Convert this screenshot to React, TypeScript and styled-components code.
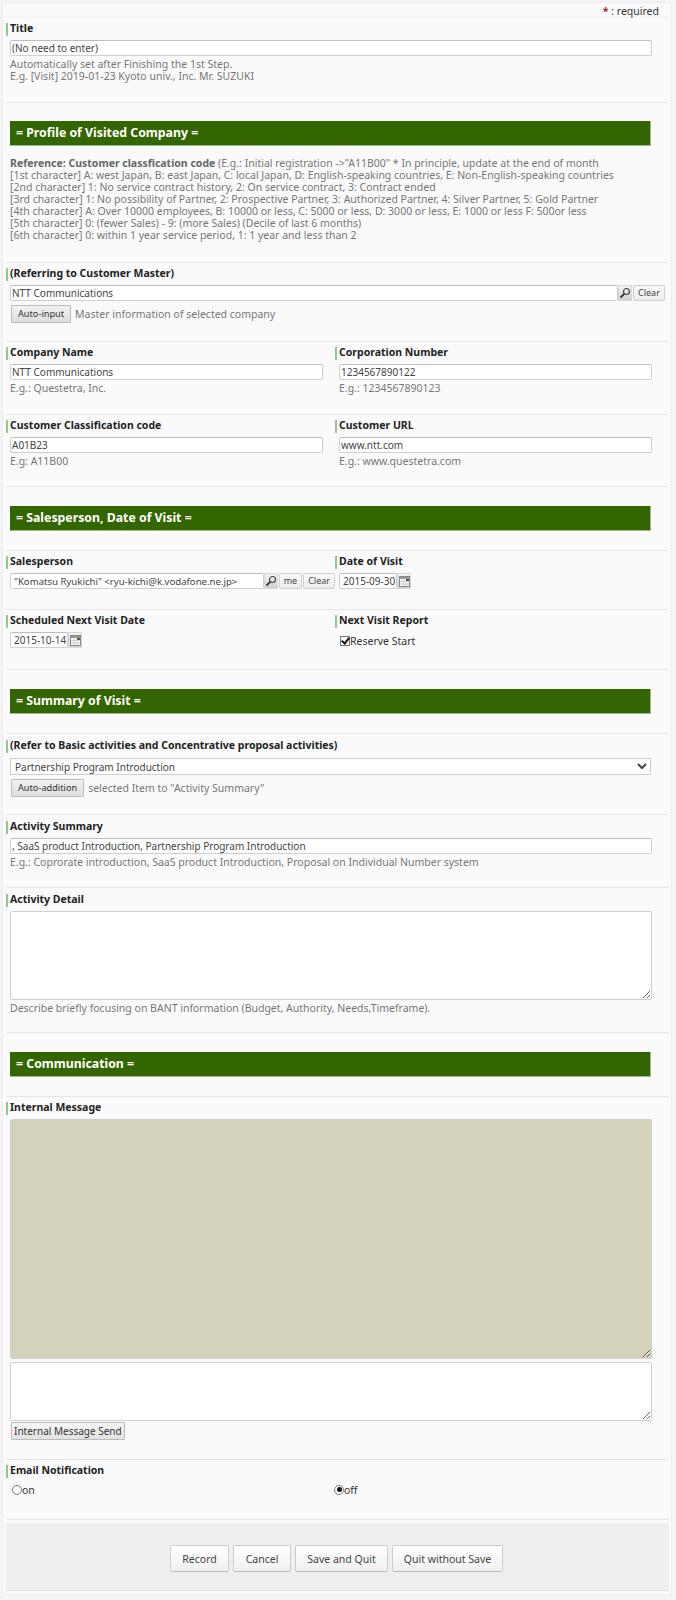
import styled, { createGlobalStyle } from "styled-components";

const GlobalStyle = createGlobalStyle`
  html, body {
    margin: 0;
    padding: 0;
    background-color: #f4f4f4;
  }
  body {
    font-family: "Noto Sans", Verdana, sans-serif;
    font-size: 10.5px;
    line-height: 12px;
    color: #222;
  }
`;

const Page = styled.div`
  width: 670px;
  height: 1593px;
  margin: 2px 0 0 2px;
  padding: 0 2px 0 3px;
  box-sizing: border-box;
  background-color: #fafafa;
  border: 1px solid #eeeeee;
`;

const RequiredBar = styled.div`
  height: 15px;
  padding: 2px 10px 0 0;
  box-sizing: border-box;
  text-align: right;
  border-bottom: 1px solid #f2f2f2;
  color: #333;
`;

const Star = styled.span`
  color: #aa2222;
  font-weight: bold;
`;

const Row = styled.section<{ $height: number; $pad?: number }>`
  height: ${props => props.$height}px;
  box-sizing: border-box;
  padding-top: ${props => props.$pad ?? 5}px;
  border-bottom: 1px solid #e6e6e6;
  display: flex;
`;

const Col = styled.div<{ $half?: boolean }>`
  width: ${props => (props.$half ? "329px" : "100%")};
  flex-shrink: 0;
`;

const Label = styled.div`
  height: 13px;
  line-height: 11px;
  padding-left: 2px;
  border-left: 2px solid #8fc98f;
  font-weight: bold;
  color: #222;
  white-space: nowrap;
`;

const Body = styled.div`
  padding: 4px 0 0 4px;
`;

const TextInput = styled.input<{ $width: number; $inset?: boolean }>`
  display: block;
  width: ${props => props.$width}px;
  height: 16px;
  margin: 0;
  padding: 0 0 0 ${props => (props.$inset ? 3 : 1)}px;
  box-sizing: border-box;
  background: #fff;
  border: 1px solid #cfcfcf;
  border-top-color: #bdbdbd;
  border-radius: 2px;
  font: inherit;
  font-size: 10px;
  color: #444;
  outline: none;
`;

const UserInput = styled(TextInput)`
  font-size: 9.6px;
`;

const Help = styled.div`
  margin-top: 2px;
  color: #777;
  white-space: nowrap;
`;

const Banner = styled.h2`
  margin: 0 0 0 4px;
  width: 641px;
  height: 25px;
  box-sizing: border-box;
  padding-left: 6px;
  background-color: #336600;
  border: 1px solid #9dbb8a;
  border-width: 0 1px 1px 0;
  color: #fff;
  font-size: 12.3px;
  font-weight: bold;
  line-height: 24px;
`;

const BannerRow = styled.section<{ $height: number; $top: number }>`
  height: ${props => props.$height}px;
  box-sizing: border-box;
  padding-top: ${props => props.$top}px;
  border-bottom: 1px solid #e6e6e6;
`;

const Reference = styled.div`
  margin: 11px 0 0 4px;
  color: #777;
  white-space: nowrap;
  b {
    color: #666;
  }
`;

const InputLine = styled.div`
  display: flex;
  align-items: center;
`;

const IconButton = styled.span`
  width: 14px;
  height: 16px;
  flex-shrink: 0;
  box-sizing: border-box;
  display: flex;
  align-items: center;
  justify-content: center;
  background: linear-gradient(#f4f4f4, #d0d0d0);
  border: 1px solid #d8d8d8;
`;

const SmallButton = styled.button`
  height: 16px;
  margin: 0 0 0 1px;
  padding: 0 4px;
  background: linear-gradient(#fafafa, #ececec);
  border: 1px solid #cfcfcf;
  border-radius: 2px;
  font: inherit;
  font-size: 9px;
  color: #444;
`;

const ActionLine = styled.div`
  display: flex;
  align-items: center;
  margin-top: 4px;
  color: #777;
`;

const GreyButton = styled.button`
  height: 18px;
  margin: 0 4px 0 1px;
  padding: 0 6px;
  background: linear-gradient(#f2f2f2, #dddddd);
  border: 1px solid #bbbbbb;
  border-radius: 1px;
  font: inherit;
  font-size: 9.2px;
  color: #333;
`;

const Select = styled.select`
  display: block;
  width: 641px;
  height: 17px;
  margin-top: 1px;
  padding: 0;
  box-sizing: border-box;
  background-color: #fff;
  border: 1px solid #cfcfcf;
  font: inherit;
  font-size: 10px;
  color: #444;
  outline: none;
`;

const Area = styled.textarea<{ $height: number; $locked?: boolean; $gap?: number }>`
  display: block;
  width: 642px;
  height: ${props => props.$height}px;
  margin: ${props => props.$gap ?? 0}px 0 0;
  padding: 2px;
  box-sizing: border-box;
  background-color: ${props => (props.$locked ? "#d4d2bb" : "#fff")};
  border: 1px solid #cfcfcf;
  border-radius: 2px;
  font: inherit;
  outline: none;
`;

const SendButton = styled(GreyButton)`
  display: block;
  margin: 1px 0 0 1px;
  padding: 0 2px;
  height: 18px;
  font-size: 10px;
  background: linear-gradient(#f6f6f6, #e2e2e2);
`;

const OptionLine = styled.label`
  display: flex;
  align-items: center;
  color: #333;
  height: 13px;
`;

const ReportOption = styled(OptionLine)`
  margin: 2px 0 0 1px;
`;

const CheckBox = styled.input`
  appearance: none;
  width: 10px;
  height: 10px;
  margin: 0;
  box-sizing: border-box;
  background: #fff;
  border: 1px solid #777;
  position: relative;
  &:checked::after {
    content: "";
    position: absolute;
    left: 2px;
    top: -1px;
    width: 3px;
    height: 6px;
    border: solid #111;
    border-width: 0 2px 2px 0;
    transform: rotate(40deg);
  }
`;

const Radio = styled.input`
  appearance: none;
  width: 10px;
  height: 10px;
  margin: 0;
  box-sizing: border-box;
  background: #fff;
  border: 1px solid #777;
  border-radius: 50%;
  position: relative;
  &:checked::after {
    content: "";
    position: absolute;
    left: 1.5px;
    top: 1.5px;
    width: 5px;
    height: 5px;
    border-radius: 50%;
    background: #111;
  }
`;

const RadioGroup = styled.div`
  display: flex;
  padding: 5px 0 0 6px;
  & > label {
    width: 322px;
  }
`;

const Footer = styled.footer`
  height: 68px;
  margin-top: 3px;
  box-sizing: border-box;
  display: flex;
  justify-content: center;
  align-items: center;
  gap: 4px;
  padding: 4px 2px 0 0;
  background-color: #efefef;
  border-bottom: 1px solid #e2e2e2;
`;

const FooterButton = styled.button<{ $width: number }>`
  width: ${props => props.$width}px;
  height: 27px;
  padding: 0;
  background: linear-gradient(#ffffff, #f0f0f0);
  border: 1px solid #cccccc;
  border-bottom-color: #bbbbbb;
  border-radius: 2px;
  font: inherit;
  color: #444;
`;

const SearchIcon = () => (
  <svg width="12" height="12" viewBox="0 0 12 12" fill="none">
    <circle cx="7.5" cy="4.5" r="3" stroke="#444" strokeWidth="1.2" />
    <path d="M5.2 6.8 1.5 10.5" stroke="#333" strokeWidth="1.8" />
  </svg>
);

const CalendarIcon = () => (
  <svg width="11" height="11" viewBox="0 0 11 11" fill="none">
    <rect x="0.5" y="0.5" width="10" height="10" fill="#fff" stroke="#888" />
    <rect x="1" y="1" width="9" height="2" fill="#999" />
    <path d="M1 5.5h9M1 8h9M4 3v7M7 3v7" stroke="#ccc" />
    <rect x="7" y="3" width="3" height="2" fill="#555" />
  </svg>
);

function App() {
  return (
    <>
      <GlobalStyle />
      <Page>
        <RequiredBar>
          <Star>*</Star> : required
        </RequiredBar>

        <Row $height={85}>
          <Col>
            <Label>Title</Label>
            <Body>
              <TextInput $width={642} defaultValue="(No need to enter)" />
              <Help>
                Automatically set after Finishing the 1st Step.
                <br />
                E.g. [Visit] 2019-01-23 Kyoto univ., Inc. Mr. SUZUKI
              </Help>
            </Body>
          </Col>
        </Row>

        <BannerRow $height={160} $top={18}>
          <Banner>= Profile of Visited Company =</Banner>
          <Reference>
            <b>Reference: Customer classfication code</b> (E.g.: Initial registration -&gt;"A11B00" * In principle, update at the end of month
            <br />
            [1st character] A: west Japan, B: east Japan, C: local Japan, D: English-speaking countries, E: Non-English-speaking countries
            <br />
            [2nd character] 1: No service contract history, 2: On service contract, 3: Contract ended
            <br />
            [3rd character] 1: No possibility of Partner, 2: Prospective Partner, 3: Authorized Partner, 4: Silver Partner, 5: Gold Partner
            <br />
            [4th character] A: Over 10000 employees, B: 10000 or less, C: 5000 or less, D: 3000 or less, E: 1000 or less F: 500or less
            <br />
            [5th character] 0: (fewer Sales) - 9: (more Sales) (Decile of last 6 months)
            <br />
            [6th character] 0: within 1 year service period, 1: 1 year and less than 2
          </Reference>
        </BannerRow>

        <Row $height={79}>
          <Col>
            <Label>(Referring to Customer Master)</Label>
            <Body>
              <InputLine>
                <TextInput $width={608} defaultValue="NTT Communications" />
                <IconButton><SearchIcon /></IconButton>
                <SmallButton>Clear</SmallButton>
              </InputLine>
              <ActionLine>
                <GreyButton>Auto-input</GreyButton>
                Master information of selected company
              </ActionLine>
            </Body>
          </Col>
        </Row>

        <Row $height={73}>
          <Col $half>
            <Label>Company Name</Label>
            <Body>
              <TextInput $width={313} defaultValue="NTT Communications" />
              <Help>E.g.: Questetra, Inc.</Help>
            </Body>
          </Col>
          <Col $half>
            <Label>Corporation Number</Label>
            <Body>
              <TextInput $width={313} defaultValue="1234567890122" />
              <Help>E.g.: 1234567890123</Help>
            </Body>
          </Col>
        </Row>

        <Row $height={72}>
          <Col $half>
            <Label>Customer Classification code</Label>
            <Body>
              <TextInput $width={313} defaultValue="A01B23" />
              <Help>E.g: A11B00</Help>
            </Body>
          </Col>
          <Col $half>
            <Label>Customer URL</Label>
            <Body>
              <TextInput $width={313} defaultValue="www.ntt.com" />
              <Help>E.g.: www.questetra.com</Help>
            </Body>
          </Col>
        </Row>

        <BannerRow $height={64} $top={19}>
          <Banner>= Salesperson, Date of Visit =</Banner>
        </BannerRow>

        <Row $height={59}>
          <Col $half>
            <Label>Salesperson</Label>
            <Body>
              <InputLine>
                <UserInput $width={257} $inset defaultValue={'"Komatsu Ryukichi" <ryu-kichi@k.vodafone.ne.jp>'} />
                <IconButton><SearchIcon /></IconButton>
                <SmallButton>me</SmallButton>
                <SmallButton>Clear</SmallButton>
              </InputLine>
            </Body>
          </Col>
          <Col $half>
            <Label>Date of Visit</Label>
            <Body>
              <InputLine>
                <TextInput $width={58} $inset defaultValue="2015-09-30" />
                <IconButton><CalendarIcon /></IconButton>
              </InputLine>
            </Body>
          </Col>
        </Row>

        <Row $height={60}>
          <Col $half>
            <Label>Scheduled Next Visit Date</Label>
            <Body>
              <InputLine>
                <TextInput $width={58} $inset defaultValue="2015-10-14" />
                <IconButton><CalendarIcon /></IconButton>
              </InputLine>
            </Body>
          </Col>
          <Col $half>
            <Label>Next Visit Report</Label>
            <Body>
              <ReportOption>
                <CheckBox type="checkbox" defaultChecked />
                Reserve Start
              </ReportOption>
            </Body>
          </Col>
        </Row>

        <BannerRow $height={64} $top={19}>
          <Banner>= Summary of Visit =</Banner>
        </BannerRow>

        <Row $height={81} $pad={6}>
          <Col>
            <Label>(Refer to Basic activities and Concentrative proposal activities)</Label>
            <Body>
              <Select defaultValue="p">
                <option value="p">Partnership Program Introduction</option>
              </Select>
              <ActionLine>
                <GreyButton>Auto-addition</GreyButton>
                selected Item to "Activity Summary"
              </ActionLine>
            </Body>
          </Col>
        </Row>

        <Row $height={73} $pad={6}>
          <Col>
            <Label>Activity Summary</Label>
            <Body>
              <TextInput $width={642} defaultValue=", SaaS product Introduction, Partnership Program Introduction" />
              <Help>E.g.: Coprorate introduction, SaaS product Introduction, Proposal on Individual Number system</Help>
            </Body>
          </Col>
        </Row>

        <Row $height={145} $pad={6}>
          <Col>
            <Label>Activity Detail</Label>
            <Body>
              <Area $height={89} />
              <Help>Describe briefly focusing on BANT information (Budget, Authority, Needs,Timeframe).</Help>
            </Body>
          </Col>
        </Row>

        <BannerRow $height={64} $top={19}>
          <Banner>= Communication =</Banner>
        </BannerRow>

        <Row $height={363}>
          <Col>
            <Label>Internal Message</Label>
            <Body>
              <Area $height={240} $locked />
              <Area $height={59} $gap={3} />
              <SendButton>Internal Message Send</SendButton>
            </Body>
          </Col>
        </Row>

        <Row $height={60}>
          <Col>
            <Label>Email Notification</Label>
            <RadioGroup>
              <OptionLine>
                <Radio type="radio" name="notify" />
                on
              </OptionLine>
              <OptionLine>
                <Radio type="radio" name="notify" defaultChecked />
                off
              </OptionLine>
            </RadioGroup>
          </Col>
        </Row>

        <Footer>
          <FooterButton $width={59}>Record</FooterButton>
          <FooterButton $width={58}>Cancel</FooterButton>
          <FooterButton $width={93}>Save and Quit</FooterButton>
          <FooterButton $width={111}>Quit without Save</FooterButton>
        </Footer>
      </Page>
    </>
  );
}

export default App;
